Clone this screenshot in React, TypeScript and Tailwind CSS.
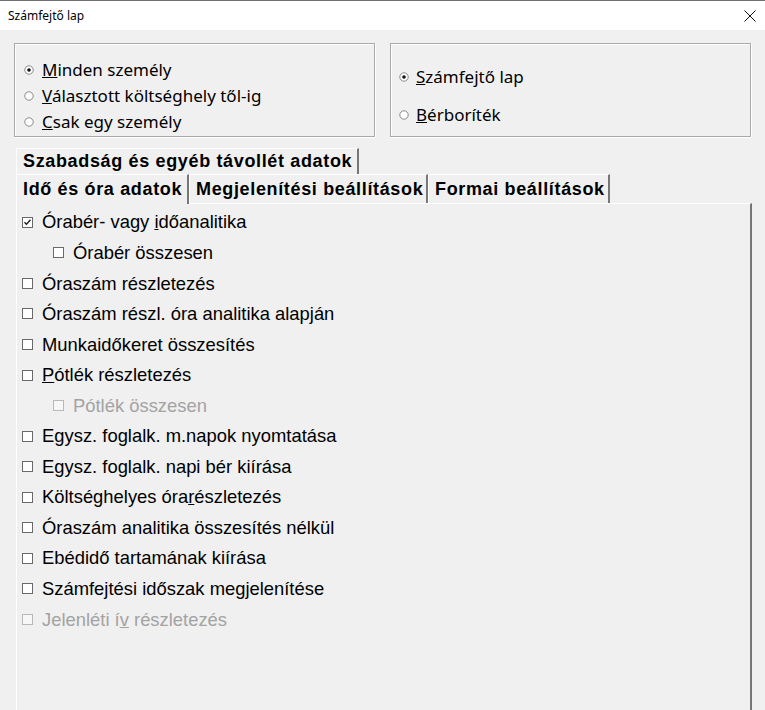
import React from "react";

const SEGOE = { fontFamily: '"Noto Sans", "Open Sans", sans-serif' };
const ARIAL = { fontFamily: '"Liberation Sans", Arial, sans-serif' };

function Radio({ checked }: { checked?: boolean }) {
  return (
    <svg width="10" height="10" viewBox="0 0 10 10" className="shrink-0">
      <circle cx="5" cy="5" r="4.2" fill="#fff" stroke="#8a8a8a" strokeWidth="1" />
      {checked && <circle cx="5" cy="5" r="1.8" fill="#111" />}
    </svg>
  );
}

function Box({ checked, disabled }: { checked?: boolean; disabled?: boolean }) {
  return (
    <span
      className={
        "relative inline-block w-[11px] h-[11px] shrink-0 border " +
        (disabled ? "border-[#b8b8b8] bg-[#f7f7f7]" : "border-[#6a6a6a] bg-white")
      }
    >
      {checked && (
        <svg width="9" height="9" viewBox="0 0 9 9" className="absolute left-0 top-0">
          <path d="M1.5 4.2 L3.5 6.3 L7.5 1.8" fill="none" stroke="#222" strokeWidth="1.4" />
        </svg>
      )}
    </span>
  );
}

type Item = { pre: string; u?: string; post?: string; checked?: boolean; disabled?: boolean; indent?: boolean };

const items: Item[] = [
  { pre: "Órabér- vagy ", u: "i", post: "dőanalitika", checked: true },
  { pre: "Órabér összesen", indent: true },
  { pre: "Óraszám részletezés" },
  { pre: "Óraszám részl. óra analitika alapján" },
  { pre: "Munkaidőkeret összesítés" },
  { pre: "", u: "P", post: "ótlék részletezés" },
  { pre: "Pótlék összesen", indent: true, disabled: true },
  { pre: "Egysz. foglalk. m.napok nyomtatása" },
  { pre: "Egysz. foglalk. napi bér kiírása" },
  { pre: "Költséghelyes óra", u: "r", post: "észletezés" },
  { pre: "Óraszám analitika összesítés nélkül" },
  { pre: "Ebédidő tartamának kiírása" },
  { pre: "Számfejtési időszak megjelenítése" },
  { pre: "Jelenléti í", u: "v", post: " részletezés", disabled: true },
];

function Tab({ label, w, h, selected }: { label: string; w: string; h: string; selected?: boolean }) {
  return (
    <div
      className={
        "flex items-center pl-[6px] border-t border-l border-t-white border-l-white border-r-2 border-r-[#777] font-bold text-[18px] tracking-[0.65px] text-black bg-[#f0f0f0] whitespace-nowrap overflow-hidden " +
        w +
        " " +
        h +
        (selected ? " relative z-10 -mb-px" : "")
      }
      style={ARIAL}
    >
      {label}
    </div>
  );
}

export default function App() {
  return (
    <div className="w-[765px] h-[710px] bg-[#f0f0f0] overflow-hidden flex flex-col">
      {/* title bar */}
      <div className="h-[30px] bg-white border-t border-[#707070] flex items-center justify-between pl-[8px] pr-[9px] shrink-0">
        <span className="text-[12px] text-black leading-none" style={SEGOE}>
          Számfejtő lap
        </span>
        <svg width="12" height="12" viewBox="0 0 12 12">
          <path d="M0.5 0.5 L11.5 11.5 M11.5 0.5 L0.5 11.5" stroke="#111" strokeWidth="1" />
        </svg>
      </div>

      {/* group boxes */}
      <div className="flex gap-[15px] pl-[14px] mt-[13px]">
        <div className="w-[361px] h-[94px] border border-[#a9a9a9] shadow-[inset_1px_1px_0_#fff,1px_1px_0_#fff] flex flex-col pl-[9px] pt-[13px] text-[17px] text-black" style={SEGOE}>
          <div className="flex items-center gap-[8px] h-[26px]">
            <Radio checked />
            <span><u>M</u>inden személy</span>
          </div>
          <div className="flex items-center gap-[8px] h-[26px]">
            <Radio />
            <span><u>V</u>álasztott költséghely től-ig</span>
          </div>
          <div className="flex items-center gap-[8px] h-[25px]">
            <Radio />
            <span><u>C</u>sak egy személy</span>
          </div>
        </div>
        <div className="w-[361px] h-[94px] border border-[#a9a9a9] shadow-[inset_1px_1px_0_#fff,1px_1px_0_#fff] flex flex-col pl-[8px] pt-[14px] text-[17px] text-black" style={SEGOE}>
          <div className="flex items-center gap-[7px] h-[38px]">
            <Radio checked />
            <span><u>S</u>zámfejtő lap</span>
          </div>
          <div className="flex items-center gap-[7px] h-[38px]">
            <Radio />
            <span><u>B</u>érboríték</span>
          </div>
        </div>
      </div>

      {/* tabs */}
      <div className="pl-[16px] mt-[11px] flex flex-col">
        <div className="flex">
          <Tab label="Szabadság és egyéb távollét adatok" w="w-[343px]" h="h-[26px]" />
        </div>
        <div className="flex">
          <Tab label="Idő és óra adatok" w="w-[173px]" h="h-[30px]" selected />
          <Tab label="Megjelenítési beállítások" w="w-[239px]" h="h-[29px]" />
          <Tab label="Formai beállítások" w="w-[182px]" h="h-[29px]" />
        </div>
      </div>

      {/* panel */}
      <div className="ml-[16px] w-[736px] flex-1 border-t border-l border-t-white border-l-white border-r-2 border-r-[#777] flex flex-col pt-[3px] pl-[5px]">
        {items.map((it, i) => (
          <div
            key={i}
            className={"flex items-center gap-[9px] h-[30.55px] text-[18.4px] " + (it.indent ? "pl-[31px] " : "") + (it.disabled ? "text-[#a3a3a3]" : "text-black")}
            style={ARIAL}
          >
            <Box checked={it.checked} disabled={it.disabled} />
            <span className="whitespace-nowrap">
              {it.pre}
              {it.u && <u>{it.u}</u>}
              {it.post}
            </span>
          </div>
        ))}
      </div>
    </div>
  );
}
